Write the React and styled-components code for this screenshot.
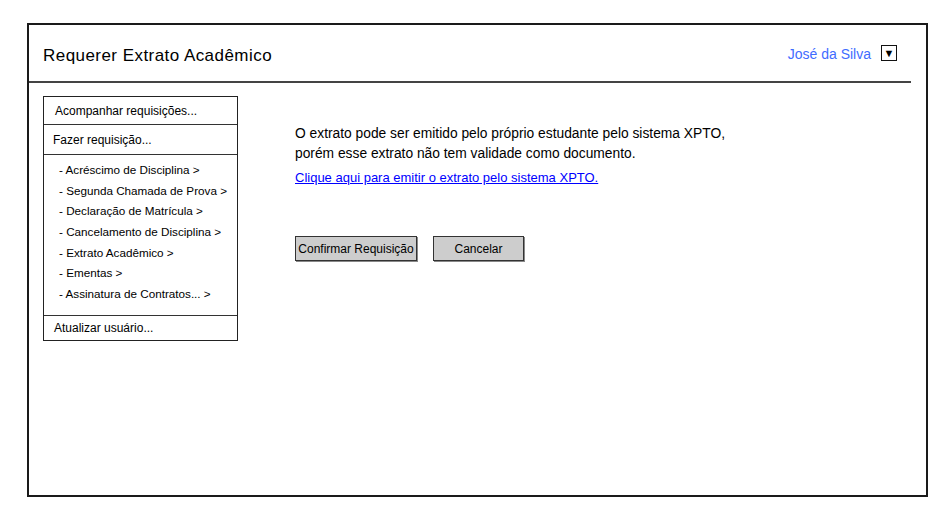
import React from "react";
import styled, { createGlobalStyle } from "styled-components";

const Global = createGlobalStyle`
  html, body { margin: 0; padding: 0; background: #fff; }
  body { font-family: "Comic Sans MS", "Liberation Sans", sans-serif; color: #111; }
`;

const Page = styled.div`
  padding: 23px 0 0 27px;
  width: 940px;
  height: 519px;
  box-sizing: border-box;
`;

const Frame = styled.div`
  width: 901px;
  height: 474px;
  box-sizing: border-box;
  border: 2px solid #1a1a1a;
  display: flex;
  flex-direction: column;
`;

const Header = styled.header`
  height: 56px;
  margin-right: 15px;
  border-bottom: 2px solid #444;
  display: flex;
  align-items: center;
  justify-content: space-between;
  padding: 0 14px 0 14px;
  box-sizing: content-box;
`;

const Title = styled.h1`
  margin: 6px 0 0 0;
  font-size: 17px;
  font-weight: normal;
  color: #000;
  letter-spacing: 0.45px;
`;

const User = styled.div`
  display: flex;
  align-items: center;
  gap: 10px;
`;

const UserName = styled.span`
  color: #3f6cff;
  font-size: 14px;
  margin-top: 2px;
`;

const DropBox = styled.span`
  width: 14px;
  height: 14px;
  border: 1px solid #111;
  display: flex;
  align-items: center;
  justify-content: center;
  font-size: 11px;
  line-height: 1;
  color: #000;
`;

const Body = styled.div`
  display: flex;
  padding: 13px 0 0 14px;
  gap: 57px;
`;

const Side = styled.nav`
  width: 195px;
  box-sizing: border-box;
  border: 1px solid #222;
  font-size: 12px;
  color: #000;
  align-self: flex-start;
`;

const Row = styled.div`
  height: ${(p) => p.h}px;
  display: flex;
  align-items: center;
  padding-left: ${(p) => p.pl}px;
  border-bottom: ${(p) => (p.last ? "none" : "1px solid #333")};
  box-sizing: border-box;
`;

const SubList = styled.ul`
  list-style: none;
  margin: 0;
  padding: 5px 0 10px 15px;
  border-bottom: 1px solid #333;
`;

const SubItem = styled.li`
  height: 20.7px;
  line-height: 20.7px;
  white-space: nowrap;
  font-size: 11.7px;
`;

const Main = styled.main`
  padding-top: 28px;
  display: flex;
  flex-direction: column;
`;

const Para = styled.p`
  margin: 0;
  font-size: 13.8px;
  line-height: 20px;
  color: #000;
`;

const Link = styled.a`
  margin-top: 5px;
  font-family: "Liberation Sans", Arial, sans-serif;
  font-size: 13px;
  line-height: 18px;
  color: #0000ff;
  text-decoration: underline;
  align-self: flex-start;
`;

const Buttons = styled.div`
  display: flex;
  gap: 16px;
  margin-top: 49px;
`;

const Button = styled.button`
  width: ${(p) => p.w}px;
  height: 25px;
  background: #cdcdcd;
  border: 1px solid #333;
  box-shadow: 1px 1px 0 #888;
  font-family: inherit;
  font-size: 12px;
  color: #000;
  padding: 0;
  white-space: nowrap;
`;

const subs = [
  "- Acréscimo de Disciplina >",
  "- Segunda Chamada de Prova >",
  "- Declaração de Matrícula >",
  "- Cancelamento de Disciplina >",
  "- Extrato Acadêmico >",
  "- Ementas >",
  "- Assinatura de Contratos... >",
];

export default function App() {
  return (
    <>
      <Global />
      <Page>
        <Frame>
          <Header>
            <Title>Requerer Extrato Acadêmico</Title>
            <User>
              <UserName>José da Silva</UserName>
              <DropBox>▼</DropBox>
            </User>
          </Header>
          <Body>
            <Side>
              <Row h={28} pl={11}>Acompanhar requisições...</Row>
              <Row h={30} pl={9}>Fazer requisição...</Row>
              <SubList>
                {subs.map((s) => (
                  <SubItem key={s}>{s}</SubItem>
                ))}
              </SubList>
              <Row h={24} pl={10} last>Atualizar usuário...</Row>
            </Side>
            <Main>
              <Para>
                O extrato pode ser emitido pelo próprio estudante pelo sistema XPTO,
                <br />
                porém esse extrato não tem validade como documento.
              </Para>
              <Link href="#">Clique aqui para emitir o extrato pelo sistema XPTO.</Link>
              <Buttons>
                <Button w={122}>Confirmar Requisição</Button>
                <Button w={91}>Cancelar</Button>
              </Buttons>
            </Main>
          </Body>
        </Frame>
      </Page>
    </>
  );
}
